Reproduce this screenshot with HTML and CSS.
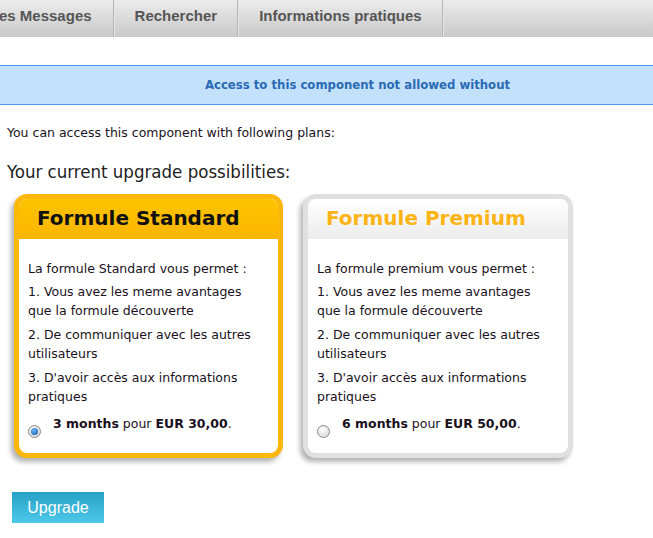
FILE: index.html
```html
<!DOCTYPE html>
<html lang="en">
<head>
    <meta charset="UTF-8">
    <title>Upgrade</title>
    <link rel="stylesheet" href="styles.css">
</head>
<body>
    <div class="menu">
        <a class="menu-item first" href="#">es Messages</a>
        <a class="menu-item" href="#">Rechercher</a>
        <a class="menu-item" href="#">Informations pratiques</a>
    </div>

    <div class="alert">Access to this component not allowed without</div>

    <div class="content">
        <p class="intro">You can access this component with following plans:</p>
        <h2 class="title">Your current upgrade possibilities:</h2>

        <div class="plans">
            <div class="plan plan-standard">
                <div class="plan-head">Formule Standard</div>
                <div class="plan-body">
                    <p>La formule Standard vous permet :</p>
                    <p>1. Vous avez les meme avantages que la formule découverte</p>
                    <p>2. De communiquer avec les autres utilisateurs</p>
                    <p>3. D'avoir accès aux informations pratiques</p>
                    <div class="price">
                        <span class="radio checked"></span>
                        <span><strong>3 months</strong> pour <strong>EUR 30,00</strong>.</span>
                    </div>
                </div>
            </div>
            <div class="plan plan-premium">
                <div class="plan-head">Formule Premium</div>
                <div class="plan-body">
                    <p>La formule premium vous permet :</p>
                    <p>1. Vous avez les meme avantages que la formule découverte</p>
                    <p>2. De communiquer avec les autres utilisateurs</p>
                    <p>3. D'avoir accès aux informations pratiques</p>
                    <div class="price">
                        <span class="radio"></span>
                        <span><strong>6 months</strong> pour <strong>EUR 50,00</strong>.</span>
                    </div>
                </div>
            </div>
        </div>

        <button class="upgrade">Upgrade</button>
    </div>
</body>
</html>
```

FILE: styles.css
```css
body {
    margin: 0;
    font-family: "DejaVu Sans", Verdana, sans-serif;
    color: #1a1020;
    background: #fff;
}
.menu {
    display: flex;
    height: 37px;
    background: linear-gradient(#ececec, #c8c8c8);
}
.menu-item {
    display: flex;
    align-items: center;
    padding: 0 20px 7px 21px;
    font-family: "Liberation Sans", Arial, sans-serif;
    font-weight: bold;
    font-size: 15px;
    color: #555;
    text-decoration: none;
    border-right: 1px solid #b4b4b4;
    box-shadow: 1px 0 0 #e6e6e6;
}
.menu-item.first {
    padding-left: 0;
    margin-left: -1px;
    padding-right: 21px;
}
.alert {
    margin-top: 28px;
    height: 38px;
    line-height: 38px;
    padding-left: 62px;
    text-align: center;
    background: #c4e1fc;
    border-top: 1px solid #4a98e6;
    border-bottom: 1px solid #4a98e6;
    font-family: "DejaVu Sans Condensed", Tahoma, sans-serif;
    font-weight: bold;
    font-size: 13px;
    color: #2a6ab4;
}
.content {
    padding: 0 7px;
}
.intro {
    margin: 20px 0 0;
    font-size: 12.5px;
    line-height: 16px;
}
.title {
    margin: 20px 0 0;
    font-family: "DejaVu Sans Condensed", Tahoma, sans-serif;
    font-weight: normal;
    font-size: 18.5px;
    line-height: 22px;
    color: #222;
}
.plans {
    display: flex;
    gap: 20px;
    margin: 11px 0 0 7px;
}
.plan {
    width: 259px;
    border: 5px solid #fbb80a;
    border-radius: 13px;
    overflow: hidden;
    background: #fff;
    box-shadow: -3px 4px 5px rgba(0, 0, 0, 0.3);
}
.plan-premium {
    width: 260px;
    border-color: #e0e0e0;
}
.plan-premium .plan-body {
    padding-right: 10px;
}
.plan-head {
    height: 40px;
    line-height: 38px;
    padding-left: 18px;
    font-weight: bold;
    font-size: 20px;
    color: #111;
    background: linear-gradient(#fdc400, #fab500);
}
.plan-premium .plan-head {
    color: #fcb414;
    background: linear-gradient(#ffffff, #ebebeb);
}
.plan-body {
    padding: 20px 9px 15px;
    font-size: 12.5px;
    line-height: 19px;
}
.plan-body p {
    margin: 0 0 5px;
}
.plan-body p:first-child {
    margin-bottom: 4px;
}
.price {
    display: flex;
    align-items: flex-start;
    gap: 12px;
    margin-top: 8px;
}
.price strong {
    font-weight: bold;
}
.radio {
    width: 11px;
    height: 11px;
    margin: 11px 0 0 0;
    border: 1px solid #8a8a8a;
    border-radius: 50%;
    background: radial-gradient(circle at 40% 35%, #ffffff, #cfcfcf);
    flex: none;
    position: relative;
}
.radio.checked::after {
    content: "";
    position: absolute;
    left: 2px;
    top: 2px;
    width: 7px;
    height: 7px;
    border-radius: 50%;
    background: radial-gradient(circle at 40% 35%, #6fb8ff, #0a4e9a);
}
.upgrade {
    margin: 34px 0 0 5px;
    width: 92px;
    height: 31px;
    border: none;
    background: linear-gradient(#26a0c4, #4ec9ea);
    color: #fff;
    font-family: "Liberation Sans", Arial, sans-serif;
    font-size: 16px;
    cursor: pointer;
}
```
